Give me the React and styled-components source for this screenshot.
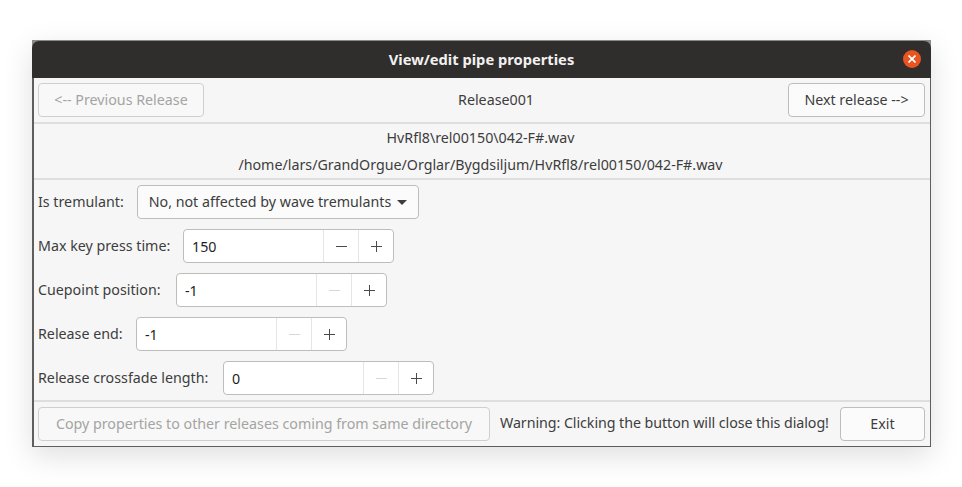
import React from 'react';
import styled, { createGlobalStyle } from 'styled-components';

const Global = createGlobalStyle`
  html, body {
    margin: 0;
    padding: 0;
    background: #fff;
  }
`;

const Page = styled.div`
  width: 962px;
  height: 487px;
  padding: 40px 31px 40px 32px;
  box-sizing: border-box;
  overflow: hidden;
  font-family: 'Noto Sans', 'Open Sans', sans-serif;
  font-size: 14.25px;
  color: #3d3d3d;
`;

const Win = styled.div`
  height: 406px;
  display: flex;
  flex-direction: column;
  border-top: 1px solid #8a8a8a;
  background: #8a8a8a;
  box-shadow: 0 9px 28px rgba(0, 0, 0, 0.13);
`;

const TitleBar = styled.div`
  height: 37px;
  flex: none;
  border-radius: 7px 7px 0 0;
  background: #2f2e2d;
  display: flex;
  align-items: center;
  justify-content: center;
  position: relative;
  color: #f2f1f0;
  font-weight: 700;
  font-size: 14.7px;
  padding-bottom: 1px;
  box-sizing: border-box;
`;

const CloseBtn = styled.div`
  position: absolute;
  right: 10px;
  top: 9px;
  width: 18px;
  height: 18px;
  border-radius: 50%;
  background: #e95420;
  display: flex;
  align-items: center;
  justify-content: center;
`;

const Body = styled.div`
  flex: 1;
  display: flex;
  flex-direction: column;
  border: 1px solid #5e5e5e;
  border-top: 0;
  border-left-width: 2px;
  background: #f6f6f6;
`;

const Row = styled.div`
  display: flex;
  align-items: center;
  justify-content: space-between;
  padding: 5px 5px 5px 4px;
  height: 44px;
  box-sizing: border-box;
  flex: none;
`;

const RowText = styled.span`
  padding-bottom: 1px;
`;

const Sep = styled.div`
  height: 2px;
  flex: none;
  background: #dededc;
`;

const Button = styled.div`
  height: 34px;
  box-sizing: border-box;
  width: ${(p) => p.$w}px;
  flex: none;
  display: flex;
  align-items: center;
  justify-content: center;
  gap: 6px;
  padding-bottom: 2px;
  border: 1px solid ${(p) => (p.$disabled ? '#cfcfcd' : '#bdbdbb')};
  border-radius: 4px;
  background: ${(p) => (p.$disabled ? '#f8f8f8' : '#fbfbfb')};
  color: ${(p) => (p.$disabled ? '#a4a4a2' : '#3d3d3d')};
  white-space: nowrap;
`;

const Paths = styled.div`
  height: 54px;
  flex: none;
  display: flex;
  flex-direction: column;
  justify-content: center;
  align-items: center;
  gap: 7px;
  line-height: 20px;
  padding-right: 3px;
`;

const Form = styled.div`
  flex: 1;
  display: flex;
  flex-direction: column;
  gap: 10px;
  padding: 5px 4px;
`;

const Field = styled.div`
  display: flex;
  align-items: center;
  height: 34px;
`;

const Label = styled.span`
  width: ${(p) => p.$w}px;
  flex: none;
  white-space: nowrap;
  padding-bottom: 1px;
`;

const Caret = styled.span`
  width: 0;
  height: 0;
  margin-top: 2px;
  border-left: 5px solid transparent;
  border-right: 5px solid transparent;
  border-top: 5px solid #3d3d3d;
`;

const Spin = styled.div`
  width: 211px;
  height: 34px;
  box-sizing: border-box;
  display: flex;
  border: 1px solid #bdbdbb;
  border-radius: 4px;
  background: #fff;
`;

const SpinValue = styled.div`
  flex: 1;
  padding-left: 8px;
  display: flex;
  align-items: center;
  color: #1f1f1f;
`;

const SpinBtn = styled.div`
  width: 35px;
  box-sizing: border-box;
  border-left: 1px solid #e6e6e5;
  display: flex;
  align-items: center;
  justify-content: center;
`;

const Footer = styled.div`
  display: flex;
  align-items: center;
  padding: 5px 5px 5px 4px;
  height: 44px;
  box-sizing: border-box;
  flex: none;
`;

const Warning = styled.span`
  margin-left: 10px;
  flex: 1;
  white-space: nowrap;
  padding-bottom: 3px;
  letter-spacing: -0.06px;
`;

const Sign = ({ plus, dim }) => (
  <svg width="11" height="11" viewBox="0 0 11 11">
    <path d={plus ? 'M0 5.5h11M5.5 0v11' : 'M0 5.5h11'} stroke={dim ? '#d8d8d7' : '#4a4a4a'} fill="none" />
  </svg>
);

const SpinBox = ({ value, dim }) => (
  <Spin>
    <SpinValue>{value}</SpinValue>
    <SpinBtn><Sign dim={dim} /></SpinBtn>
    <SpinBtn><Sign plus /></SpinBtn>
  </Spin>
);

export default function App() {
  return (
    <Page>
      <Global />
      <Win>
        <TitleBar>
          View/edit pipe properties
          <CloseBtn>
            <svg width="8" height="8" viewBox="0 0 8 8">
              <path d="M0.5 0.5l7 7M7.5 0.5l-7 7" stroke="#fff" strokeWidth="1.7" fill="none" />
            </svg>
          </CloseBtn>
        </TitleBar>
        <Body>
          <Row>
            <Button $w={166} $disabled>&lt;-- Previous Release</Button>
            <RowText>Release001</RowText>
            <Button $w={137}>Next release --&gt;</Button>
          </Row>
          <Sep />
          <Paths>
            <span>HvRfl8\rel00150\042-F#.wav</span>
            <span>/home/lars/GrandOrgue/Orglar/Bygdsiljum/HvRfl8/rel00150/042-F#.wav</span>
          </Paths>
          <Sep />
          <Form>
            <Field>
              <Label $w={99}>Is tremulant:</Label>
              <Button $w={282}>No, not affected by wave tremulants <Caret /></Button>
            </Field>
            <Field>
              <Label $w={145}>Max key press time:</Label>
              <SpinBox value="150" />
            </Field>
            <Field>
              <Label $w={138}>Cuepoint position:</Label>
              <SpinBox value="-1" dim />
            </Field>
            <Field>
              <Label $w={98}>Release end:</Label>
              <SpinBox value="-1" dim />
            </Field>
            <Field>
              <Label $w={185}>Release crossfade length:</Label>
              <SpinBox value="0" dim />
            </Field>
          </Form>
          <Sep />
          <Footer>
            <Button $w={452} $disabled>Copy properties to other releases coming from same directory</Button>
            <Warning>Warning: Clicking the button will close this dialog!</Warning>
            <Button $w={85}>Exit</Button>
          </Footer>
        </Body>
      </Win>
    </Page>
  );
}
